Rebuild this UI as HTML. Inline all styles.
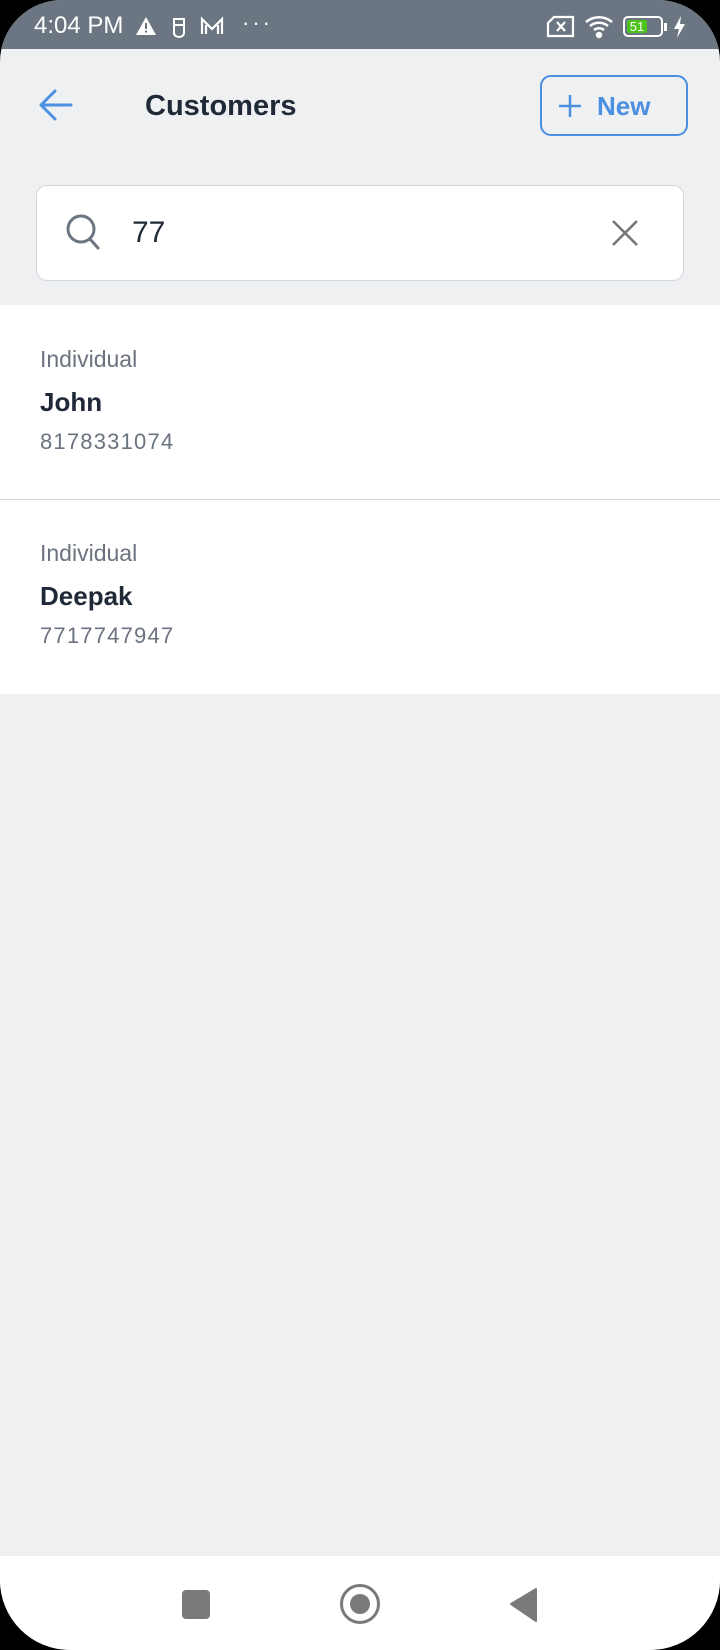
<!DOCTYPE html>
<html><head><meta charset="utf-8"><style>
*{margin:0;padding:0;box-sizing:border-box}
html,body{width:720px;height:1650px;background:#000;overflow:hidden;font-family:"Liberation Sans",Roboto,sans-serif}
#ph{position:absolute;left:0;top:0;width:720px;height:1650px;background:#eff0f2;border-radius:62px 62px 70px 70px;overflow:hidden}
#sb{position:absolute;left:0;top:0;width:720px;height:49px;background:#6b7682;color:#fff}
.t{position:absolute;white-space:nowrap}
</style></head><body><div id="ph">
<div id="sb">
<div class="t" style="left:34px;top:12px;font-size:24px">4:04 PM</div>
<svg class="t" style="left:135px;top:16px" width="22" height="20"><path d="M11 1L21 19H1Z" fill="#fff"/><rect x="10" y="7" width="2" height="6" fill="#6b7682"/><rect x="10" y="14.5" width="2" height="2" fill="#6b7682"/></svg>
<svg class="t" style="left:170px;top:16px" width="18" height="22" fill="none" stroke="#fff" stroke-width="2"><path d="M4 3h10v14a5 4 0 0 1-10 0Z"/><path d="M4 9h10"/></svg>
<svg class="t" style="left:200px;top:16px" width="24" height="20" fill="none" stroke="#fff" stroke-width="2.2"><path d="M2 18V3l10 10 10-10v15"/><path d="M6 18V9M18 18V9"/></svg>
<div class="t" style="left:242px;top:10px;font-size:22px;letter-spacing:3px">···</div>
<svg class="t" style="left:546px;top:15px" width="30" height="24" fill="none" stroke="#fff" stroke-width="2.2"><path d="M8 2h19v19H2V8Z"/><path d="M11 7l8 9M19 7l-8 9"/></svg>
<svg class="t" style="left:584px;top:14px" width="32" height="26" fill="none" stroke="#fff" stroke-width="2.5"><path d="M2 8a20 20 0 0 1 26 0M6 12a14 14 0 0 1 18 0M10 16a8 8 0 0 1 10 0"/><circle cx="15" cy="21" r="2" fill="#fff"/></svg>
<div class="t" style="left:623px;top:16px;width:40px;height:21px;border:2px solid #fff;border-radius:5px;padding:2px"><div style="width:20px;height:13px;background:#4cc31a;border-radius:2px;font-size:13px;line-height:13px;color:#fff;text-align:center">51</div></div>
<div class="t" style="left:664px;top:23px;width:3px;height:8px;background:#fff"></div>
<svg class="t" style="left:672px;top:16px" width="14" height="22"><path d="M9 0L2 13h5l-2 9 8-14H8Z" fill="#fff"/></svg>
</div>
<svg class="t" style="left:38px;top:88px" width="36" height="34" fill="none" stroke="#4a8fe0" stroke-width="3" stroke-linecap="round" stroke-linejoin="round"><path d="M33 17H4M17 3L3 17l14 14"/></svg>
<div class="t" style="left:145px;top:90px;font-size:29px;font-weight:bold;color:#1f2937">Customers</div>
<div class="t" style="left:540px;top:75px;width:148px;height:61px;border:2px solid #4a8fe0;border-radius:11px;color:#4a8fe0;font-size:26px;font-weight:bold">
<svg class="t" style="left:16px;top:17px" width="24" height="24" stroke="#4a8fe0" stroke-width="2.5"><path d="M12 1v22M1 12h22"/></svg>
<span class="t" style="left:55px;top:14px">New</span></div>
<div class="t" style="left:36px;top:185px;width:648px;height:96px;background:#fff;border:1px solid #d1d5db;border-radius:11px">
<svg class="t" style="left:29px;top:28px" width="36" height="38" fill="none" stroke="#6b7682" stroke-width="3" stroke-linecap="round"><circle cx="15" cy="15" r="13"/><path d="M24 25l8 9"/></svg>
<div class="t" style="left:95px;top:30px;font-size:30px;color:#1f2937">77</div>
<svg class="t" style="left:574px;top:33px" width="28" height="28" stroke="#777" stroke-width="2.6"><path d="M2 2l24 24M26 2L2 26"/></svg>
</div>
<div class="t" style="left:0;top:305px;width:720px;height:389px;background:#fff"></div>
<div class="t" style="left:0;top:499px;width:720px;height:1px;background:#d1d5db"></div>
<div class="t" style="left:40px;top:346px;font-size:23px;color:#6b7280">Individual</div>
<div class="t" style="left:40px;top:387px;font-size:26px;font-weight:bold;color:#1f2937">John</div>
<div class="t" style="left:40px;top:429px;font-size:22px;color:#6b7280;letter-spacing:1.2px">8178331074</div>
<div class="t" style="left:40px;top:540px;font-size:23px;color:#6b7280">Individual</div>
<div class="t" style="left:40px;top:581px;font-size:26px;font-weight:bold;color:#1f2937">Deepak</div>
<div class="t" style="left:40px;top:623px;font-size:22px;color:#6b7280;letter-spacing:1.2px">7717747947</div>
<div class="t" style="left:0;top:1556px;width:720px;height:94px;background:#fff"></div>
<div class="t" style="left:182px;top:1590px;width:28px;height:29px;background:#7a7a7a;border-radius:4px"></div>
<div class="t" style="left:340px;top:1584px;width:40px;height:40px;border:3px solid #7a7a7a;border-radius:50%"></div>
<div class="t" style="left:350px;top:1594px;width:20px;height:20px;background:#7a7a7a;border-radius:50%"></div>
<svg class="t" style="left:508px;top:1587px" width="30" height="36"><path d="M28 2V34L3 17Z" fill="#7a7a7a" stroke="#7a7a7a" stroke-width="2" stroke-linejoin="round"/></svg>
</div></body></html>
